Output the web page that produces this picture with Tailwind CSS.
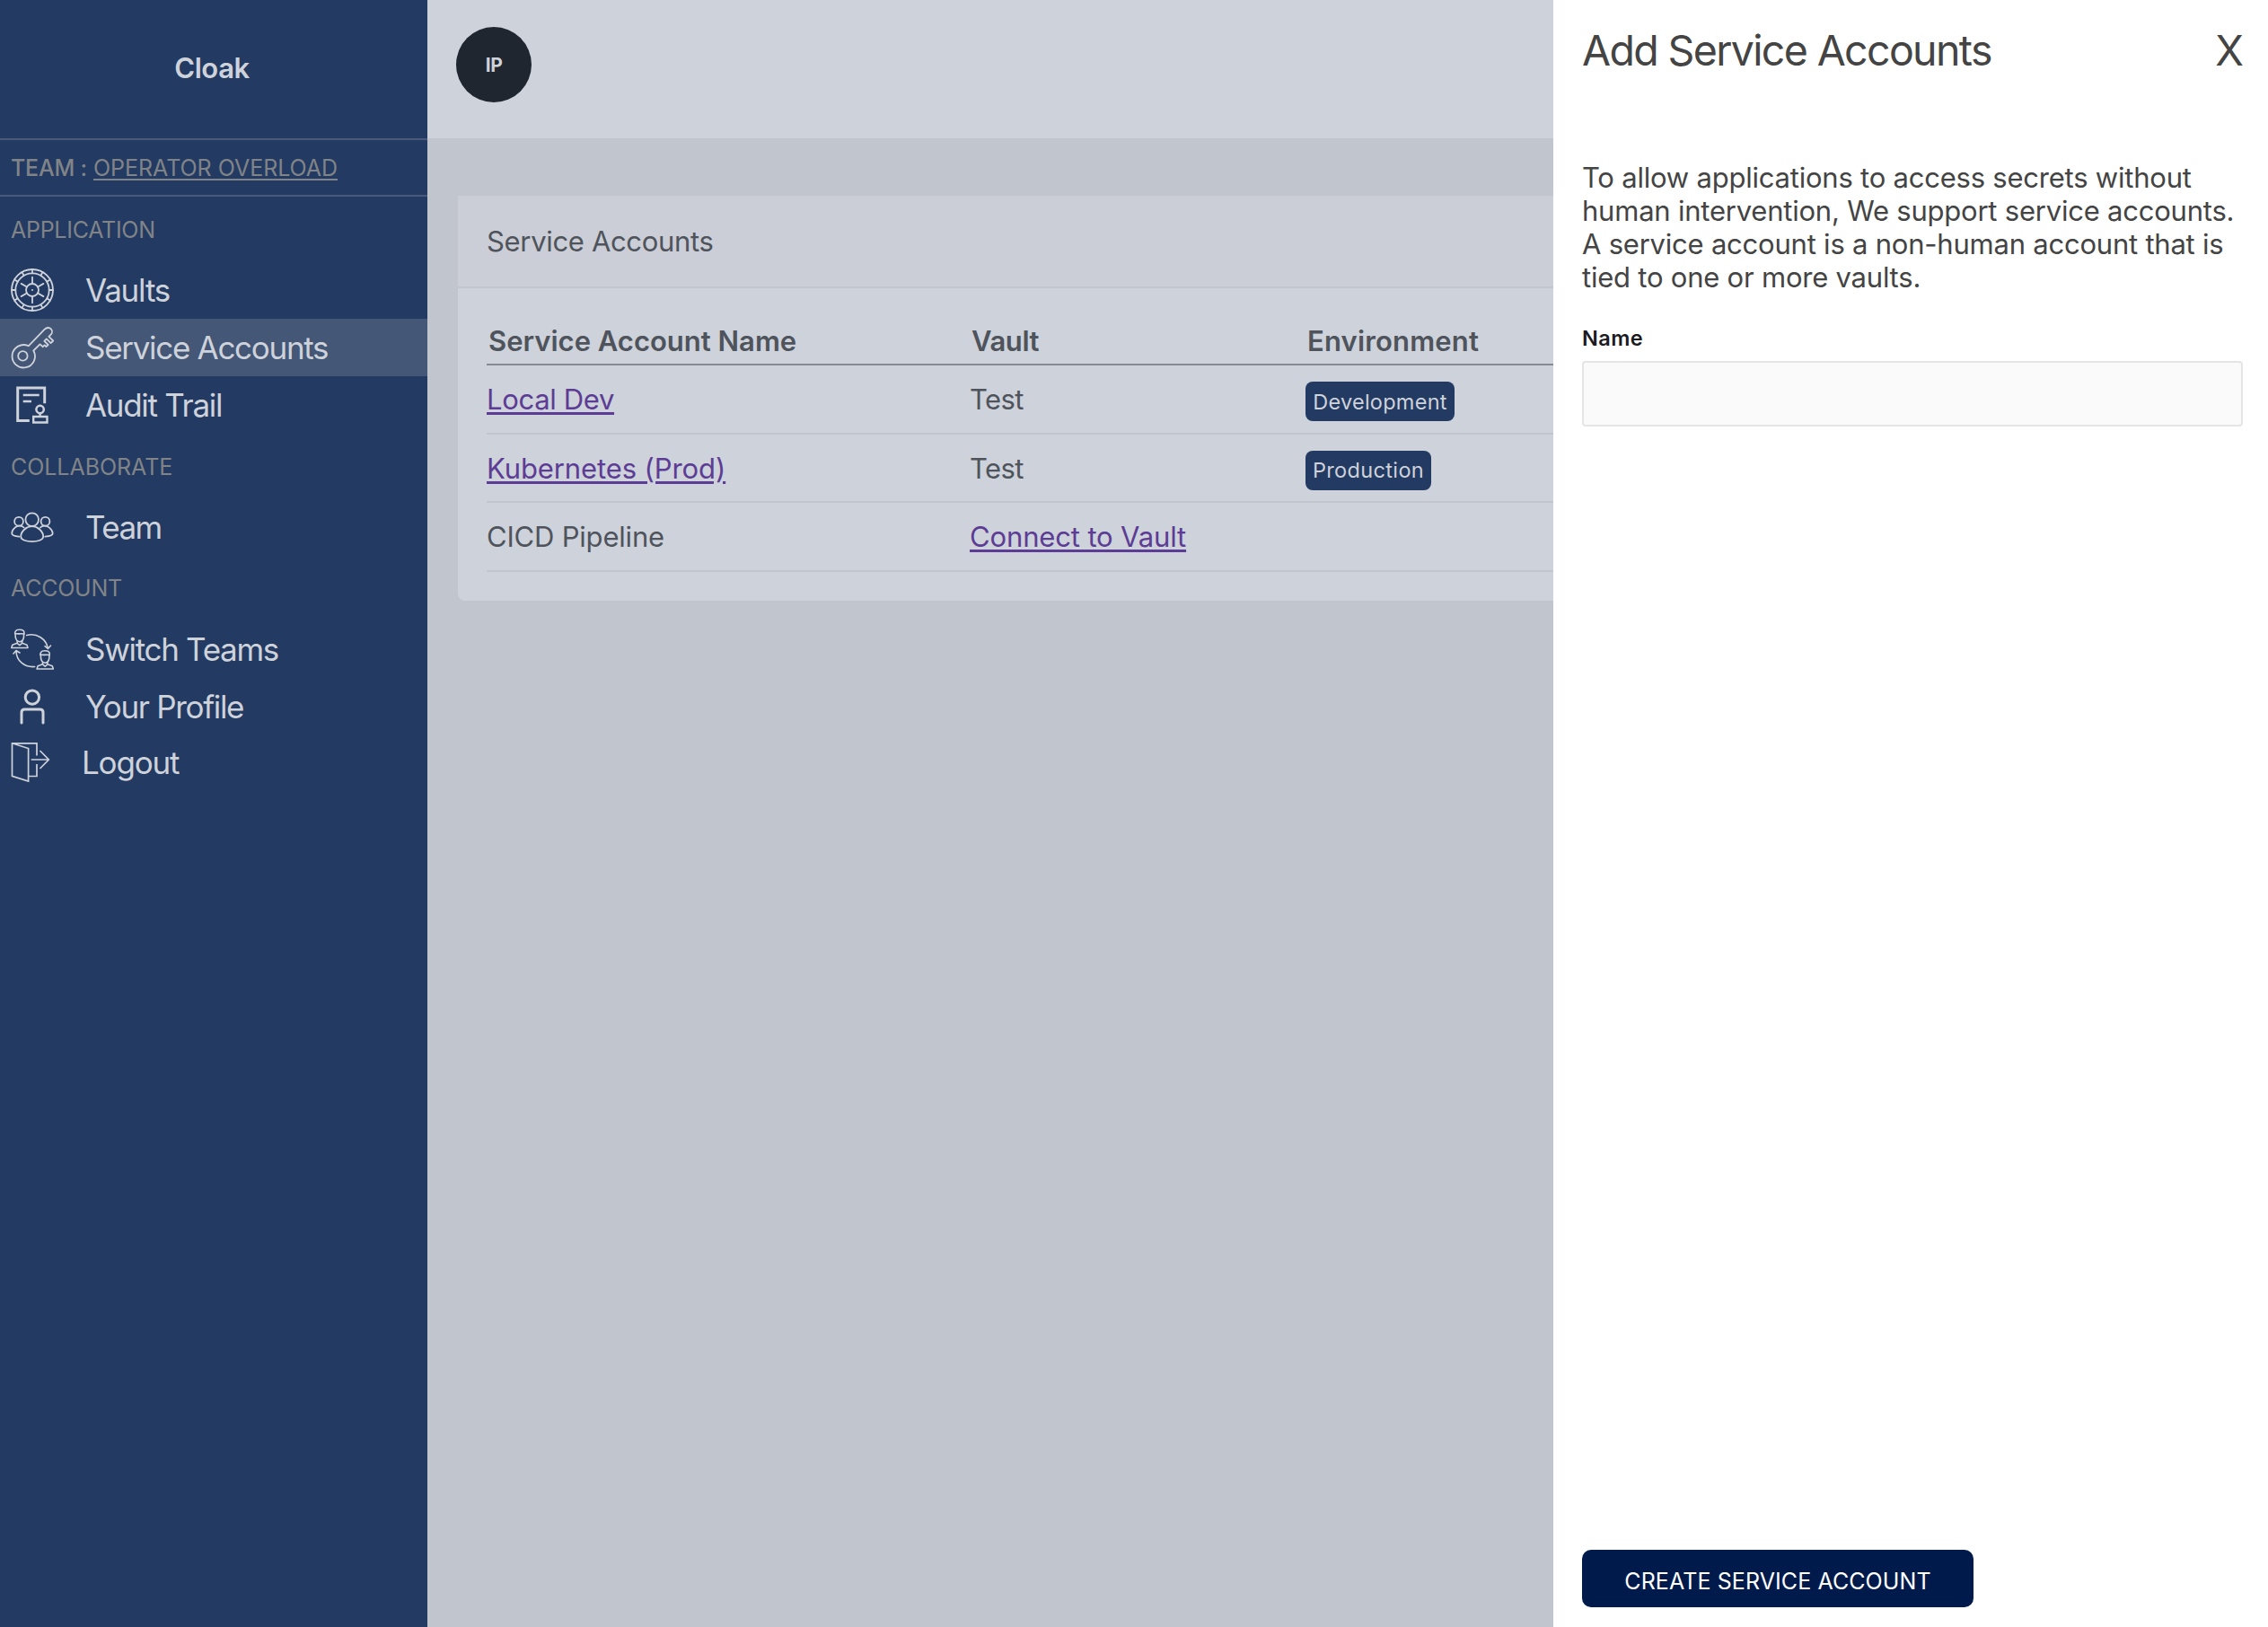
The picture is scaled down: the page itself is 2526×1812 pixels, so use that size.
<!DOCTYPE html>
<html lang="en">
<head>
<meta charset="utf-8">
<title>Cloak</title>
<script src="https://cdn.jsdelivr.net/npm/@tailwindcss/browser@4"></script>
</head>
<body class="flex h-screen overflow-hidden bg-white font-['Inter',sans-serif] text-[31px] text-[#4f545c]">

<aside class="flex w-[476px] shrink-0 flex-col bg-[#233a62] text-[35px] tracking-[-1.3px] text-[#ced2db]">
  <div class="flex h-[156px] items-center justify-center border-b-2 border-[#4a5879] pr-[4px] pb-0.5 text-[31px] font-semibold tracking-[-0.4px]">Cloak</div>
  <div class="flex h-[63px] items-center border-b-2 border-[#4a5879] pt-0.5 pl-3 text-[25px] tracking-[0.03px] text-[#808488]">
    <span class="font-medium tracking-[-0.2px]">TEAM :</span>
    <a class="ml-[7px] tracking-[-0.03px] underline decoration-2 underline-offset-[3px]">OPERATOR OVERLOAD</a>
  </div>

  <div class="flex h-[72px] items-center pt-1 pl-3 text-[25px] tracking-[-0.27px] text-[#808488]">APPLICATION</div>
  <a class="flex h-16 items-center gap-[35px] pl-3">
    <svg class="size-12 shrink-0" viewBox="0 0 48 48" fill="none" stroke="currentColor" stroke-width="1.8" stroke-linecap="round">
      <circle cx="24" cy="24" r="23"/><circle cx="24" cy="24" r="18.7"/><circle cx="24" cy="24" r="7"/><circle cx="24" cy="24" r="1" fill="currentColor" stroke="none"/>
      <path d="M24 17V9.7M24 31v7.3M17.9 20.5l-6.3-3.6M30.1 20.5l6.3-3.6M17.9 27.5l-6.3 3.6M30.1 27.5l6.3 3.6"/>
      <path d="M24 1v4.3M24 42.7V47M1 24h4.3M42.700 24H47M12.500 4.100l2.100 3.700M35.500 4.100l-2.100 3.700M12.500 43.900l2.100-3.700M35.500 43.900l-2.100-3.700M4.100 12.500l3.700 2.100M43.900 12.500l-3.700 2.100M4.100 35.500l3.700-2.100M43.900 35.500l-3.700-2.100"/>
    </svg>
    <span class="tracking-[-1.2px]">Vaults</span>
  </a>
  <a class="flex h-16 items-center gap-[35px] bg-[#455776] pl-3">
    <svg class="size-12 shrink-0" viewBox="0 0 48 48" fill="none" stroke="currentColor" stroke-width="1.8" stroke-linejoin="round">
      <circle cx="13.4" cy="33.4" r="5.2"/>
      <path d="M19.7 22.3L37.8 3.7C40 1.500 43 1.500 44.800 3.300C46.500 5.200 46.300 8 44.600 9.600L42.400 11.800L47.200 16.500L44.600 19.100L39.800 14.400L37.400 16.800L41.600 21L39.400 23.200L37.600 21.400L35.800 23.200L32.500 20.400L25.300 27.500A12.700 12.700 0 1 1 19.700 22.300Z"/>
    </svg>
    <span>Service Accounts</span>
  </a>
  <a class="flex h-16 items-center gap-[35px] pl-3">
    <svg class="size-12 shrink-0" viewBox="0 0 48 48" fill="none" stroke="currentColor" stroke-width="3">
      <path d="M37.700 22.300V5H7.700V41.500H20.800"/>
      <path d="M13.700 13H31.700M13.700 20H23" stroke-width="2.500"/>
      <circle cx="32.600" cy="29" r="4.200" stroke-width="2.500"/>
      <path d="M32.600 33V36.500M25.200 37H40.500V43.500H25.200Z" stroke-width="2.400"/>
    </svg>
    <span>Audit Trail</span>
  </a>

  <div class="flex h-[73px] items-center pt-0.5 pl-3 text-[25px] tracking-[-0.050px] text-[#808488]">COLLABORATE</div>
  <a class="flex h-16 items-center gap-[35px] pl-3">
    <svg class="size-12 shrink-0" viewBox="0 0 48 48" fill="none" stroke="currentColor" stroke-width="1.800" stroke-linecap="round">
      <circle cx="23.700" cy="14.600" r="7.300"/><circle cx="9" cy="16.700" r="4.900"/><circle cx="38.500" cy="16.700" r="4.900"/>
      <path d="M23.700 22.200C30 22.200 36.200 27.800 36.200 33.500C36.200 37.300 30 39.200 23.700 39.200S11.200 37.300 11.200 33.500C11.200 27.800 17.400 22.200 23.700 22.200Z"/>
      <path d="M14.600 23.500C12.500 21.300 7.500 20.900 4.600 23.600C2.600 25.300 1.200 28 1.200 30C1.200 32.300 5 33.300 9.300 33.600M32.900 23.500C35 21.300 40 20.900 42.900 23.600C45 25.300 46.700 28 46.700 30C46.700 32.300 43 33.300 38.300 33.600"/>
    </svg>
    <span class="mb-0.5 tracking-[-1.600px]">Team</span>
  </a>

  <div class="flex h-[72px] items-center pl-3 text-[25px] tracking-[-0.250px] text-[#808488]">ACCOUNT</div>
  <a class="flex h-16 items-center gap-[35px] pl-3">
    <svg class="size-12 shrink-0" viewBox="0 0 48 48" fill="none" stroke="currentColor" stroke-width="1.600" stroke-linejoin="round" stroke-linecap="round">
      <g id="member">
        <path d="M5.200 7.500C3.800 4 5 1.300 9.500 1.300C14 1.300 15.800 2.500 14.500 7.500V9.500C14 12.500 12 14.700 9.900 14.700S5.700 12.500 5.200 9.500Z"/>
        <path d="M4.700 5.500C8 6.500 11 5.300 14.800 6M7.200 14V16.300L1.800 18.200L.8 21.500H19L18 18.200L12.600 16.300V14M7.200 16.300L9.900 18.600L12.600 16.300"/>
      </g>
      <use href="#member" x="28.300" y="23.500"/>
      <path d="M17.700 7.500C29 4.500 39.500 11.500 41.400 22.300M38 19.700L41.400 22.500L44.500 19M26.700 42.500C15 43.500 6.200 36 6 24.700M2.900 28L6 24.500L10 27"/>
    </svg>
    <span class="mb-0.5">Switch Teams</span>
  </a>
  <a class="flex h-16 items-center gap-[35px] pl-3">
    <svg class="size-12 shrink-0" viewBox="0 0 48 48" fill="none" stroke="currentColor" stroke-width="3" stroke-linecap="round">
      <circle cx="23.900" cy="12.600" r="7.700"/>
      <path d="M12 41V29.500Q12 26 15.500 26H32.500Q36 26 36 29.500V41"/>
    </svg>
    <span class="mb-0.5 tracking-[-1.320px]">Your Profile</span>
  </a>
  <a class="flex h-[60px] items-center gap-[31px] pl-3">
    <svg class="size-12 shrink-0" viewBox="0 0 48 48" fill="none" stroke="currentColor" stroke-width="1.700">
      <path d="M29 15.500V1.800H1.500V38.300L19.600 44V7.500L1.500 1.800M29 25V38.500H19.600M22.700 20H42M32.500 10L42.300 20L32.500 30"/>
    </svg>
    <span class="mb-0.5 tracking-[-1.200px]">Logout</span>
  </a>
</aside>

<main class="w-[1254px] shrink-0 overflow-hidden bg-[#c1c5ce]">
  <header class="h-[154px] bg-[#ced2db] pt-[30px] pl-8">
    <div class="flex size-[84px] items-center justify-center rounded-full bg-[#20262f] pt-0.5 text-[21px] font-bold tracking-[-0.500px] text-[#ced2db]">IP</div>
  </header>
  <section class="mt-16 ml-[34px] h-[451px] w-[1950px] rounded-b-lg bg-[#ced2db]">
    <div class="flex h-[103px] items-center border-b-2 border-[#c1c5ce] bg-[#cbced7] pt-0.5 pl-8 tracking-[-0.330px]">Service Accounts</div>
    <div class="pl-8">
      <div class="grid h-[86px] grid-cols-[538px_374px_1fr] items-end border-b-2 border-[#878b95] pb-[2px] font-semibold">
        <div class="pl-[2px]">Service Account Name</div><div class="pl-[2px] tracking-[-0.400px]">Vault</div><div class="pl-[2px] tracking-[0.180px]">Environment</div>
      </div>
      <div class="grid h-[77px] grid-cols-[538px_374px_1fr] items-center border-b-2 border-[#c1c5ce] pt-0.5">
        <a class="tracking-[-0.330px] text-[#5c3c94] underline decoration-[3px] underline-offset-[3px]">Local Dev</a>
        <div class="tracking-[-0.600px]">Test</div>
        <div><span class="mt-[3px] flex h-11 w-[166px] items-center justify-center rounded-lg bg-[#233a62] pt-px text-[23.5px] tracking-[0.250px] text-[#ced2db]">Development</span></div>
      </div>
      <div class="grid h-[76px] grid-cols-[538px_374px_1fr] items-center border-b-2 border-[#c1c5ce] pt-0.5">
        <a class="tracking-[-0.100px] text-[#5c3c94] underline decoration-[3px] underline-offset-[3px]">Kubernetes (Prod)</a>
        <div class="tracking-[-0.600px]">Test</div>
        <div><span class="mt-[3px] flex h-11 w-[140px] items-center justify-center rounded-lg bg-[#233a62] pt-px text-[23.5px] tracking-[0.360px] text-[#ced2db]">Production</span></div>
      </div>
      <div class="grid h-[77px] grid-cols-[538px_374px_1fr] items-center border-b-2 border-[#c1c5ce] pt-0.5">
        <div class="tracking-[-0.200px]">CICD Pipeline</div>
        <a class="tracking-[-0.140px] text-[#5c3c94] underline decoration-[3px] underline-offset-[3px]">Connect to Vault</a>
      </div>
    </div>
  </section>
</main>

<section class="flex grow flex-col bg-white px-8 text-[#444444]">
  <div class="flex h-[112px] items-center justify-between pt-0.5 text-[46.5px]">
    <h1 class="tracking-[-1.650px]">Add Service Accounts</h1><button class="-mr-px">X</button>
  </div>
  <p class="mt-[67px] text-[31px] leading-[37px] tracking-[-0.220px] whitespace-nowrap">To allow applications to access secrets without<br>human intervention, We support service accounts.<br>A service account is a non-human account that is<br>tied to one or more vaults.</p>
  <label class="mt-[35px] text-[23.5px] leading-[30px] font-semibold tracking-[0.400px] text-[#1b1b1f]">Name</label>
  <input class="mt-[10px] h-[73px] w-[736px] rounded border-2 border-[#e5e5e5] bg-[#fafafa] px-4 outline-none">
  <button class="mt-auto mb-[22px] h-16 w-[436px] rounded-[10px] bg-[#001b4b] pt-2 text-[25px] tracking-[0.090px] text-white">CREATE SERVICE ACCOUNT</button>
</section>

</body>
</html>
